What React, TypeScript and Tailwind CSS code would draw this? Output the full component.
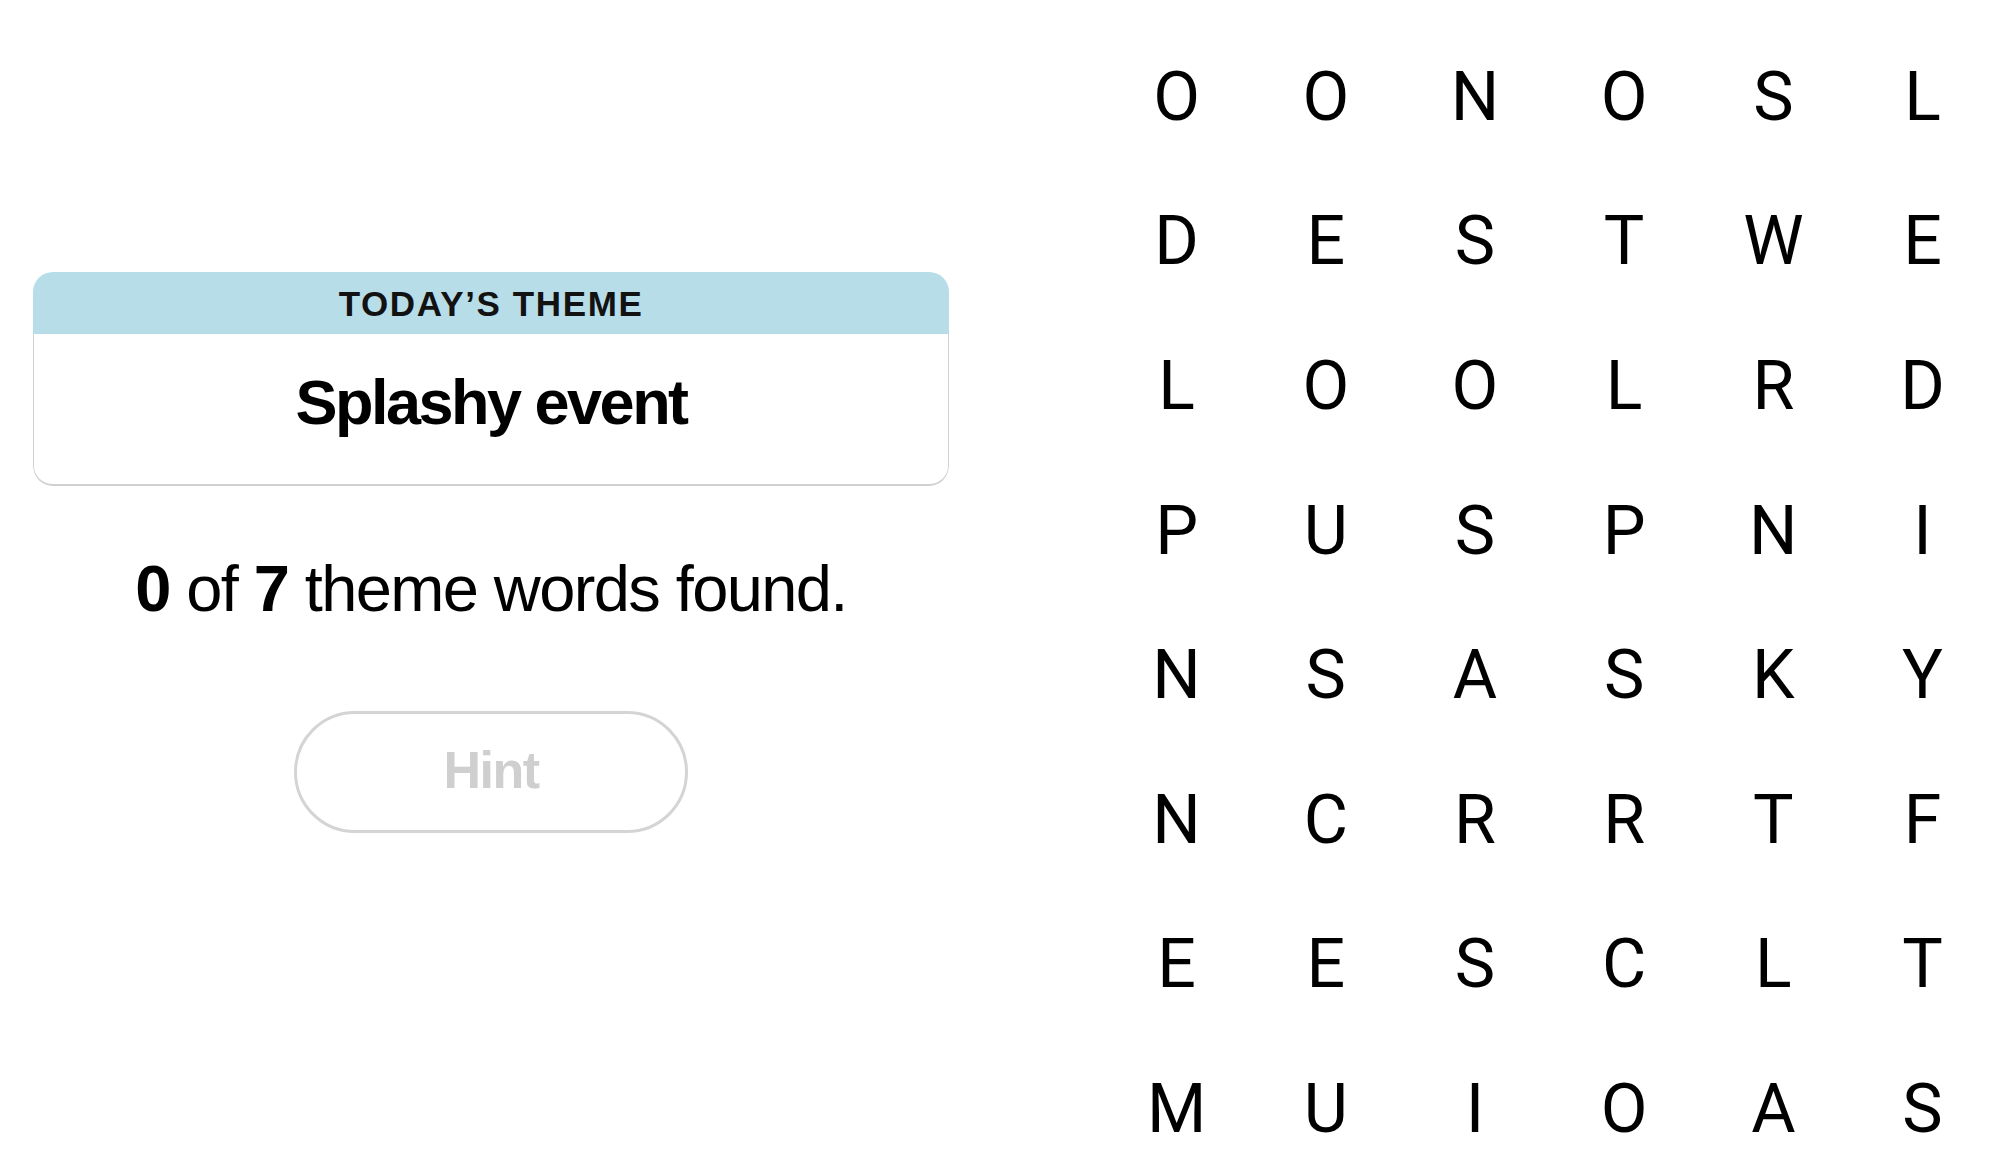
import React from "react";

const rows = [
  "OONOSL",
  "DESTWE",
  "LOOLRD",
  "PUSPNI",
  "NSASKY",
  "NCRRTF",
  "EESCLT",
  "MUIOAS",
];

export default function App() {
  const font = { fontFamily: '"Liberation Sans", Arial, sans-serif' };
  return (
    <div
      className="flex w-[2000px] h-[1176px] overflow-hidden bg-white text-black"
      style={font}
    >
      <div className="w-[982px] shrink-0 flex flex-col items-center pt-[272px]">
        <div className="w-[916px] rounded-[20px] overflow-hidden">
          <div className="h-[62px] bg-[#b7dde9] flex items-center justify-center">
            <span className="text-[35px] leading-none font-bold tracking-[1.6px] text-[#121212]">
              TODAY’S THEME
            </span>
          </div>
          <div className="box-border h-[152px] border-x border-b-2 border-[#d0d0d0] rounded-b-[20px] flex justify-center pt-[37px]">
            <span className="text-[63px] leading-none font-bold tracking-[-2.5px]">
              Splashy event
            </span>
          </div>
        </div>
        <div className="mt-[70px] text-[65px] leading-none tracking-[-1.6px] whitespace-nowrap">
          <span className="font-bold">0</span> of <span className="font-bold">7</span> theme words found.
        </div>
        <button className="mt-[90px] box-border w-[394px] h-[122px] rounded-full border-[3px] border-[#d4d4d4] bg-white flex items-center justify-center pb-[5px]">
          <span className="text-[52px] leading-none font-bold tracking-[-1.5px] text-[#cfcfcf]">
            Hint
          </span>
        </button>
      </div>
      <div className="ml-[120px] pt-[24.5px] shrink-0">
        <div
          className="grid grid-cols-[repeat(6,149.2px)] auto-rows-[144.6px]"
          style={{ fontFamily: 'Roboto, "Liberation Sans", sans-serif' }}
        >
          {rows.flatMap((r, ri) =>
            r.split("").map((ch, ci) => (
              <div
                key={`${ri}-${ci}`}
                className="flex items-center justify-center text-[68px] leading-none"
              >
                {ch}
              </div>
            ))
          )}
        </div>
      </div>
    </div>
  );
}
